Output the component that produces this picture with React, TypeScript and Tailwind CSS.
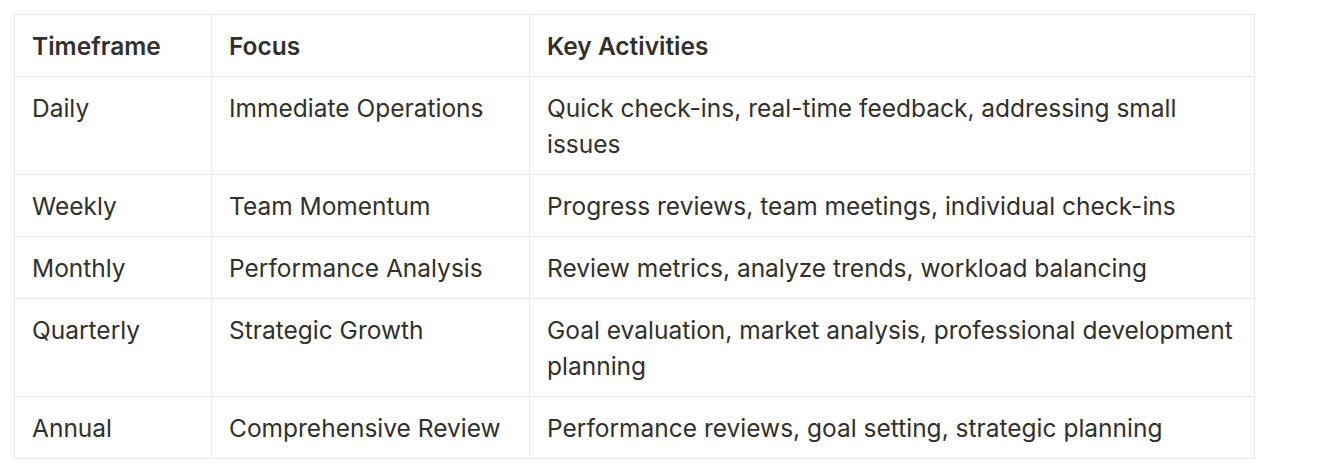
const ROWS = [
  ["Daily", "Immediate Operations", "Quick check-ins, real-time feedback, addressing small issues"],
  ["Weekly", "Team Momentum", "Progress reviews, team meetings, individual check-ins"],
  ["Monthly", "Performance Analysis", "Review metrics, analyze trends, workload balancing"],
  ["Quarterly", "Strategic Growth", "Goal evaluation, market analysis, professional development planning"],
  ["Annual", "Comprehensive Review", "Performance reviews, goal setting, strategic planning"],
];

export default function App() {
  return (
    <div className="bg-white w-[1334px] h-[476px] pt-[14px] pl-[14px] text-[#32302c] text-[24.5px] leading-[36px] font-['Inter',sans-serif]">
      <table className="border-collapse w-[1241px] table-fixed">
        <colgroup>
          <col className="w-[197px]" />
          <col className="w-[318px]" />
          <col />
        </colgroup>
        <thead>
          <tr>
            {["Timeframe", "Focus", "Key Activities"].map((h) => (
              <th key={h} className="border border-[#e9e9e7] px-[17px] py-[12.5px] text-left font-semibold align-top">
                {h}
              </th>
            ))}
          </tr>
        </thead>
        <tbody>
          {ROWS.map((r) => (
            <tr key={r[0]}>
              {r.map((c, i) => (
                <td key={i} className="border border-[#e9e9e7] px-[17px] py-[12.5px] align-top">
                  {c}
                </td>
              ))}
            </tr>
          ))}
        </tbody>
      </table>
    </div>
  );
}
